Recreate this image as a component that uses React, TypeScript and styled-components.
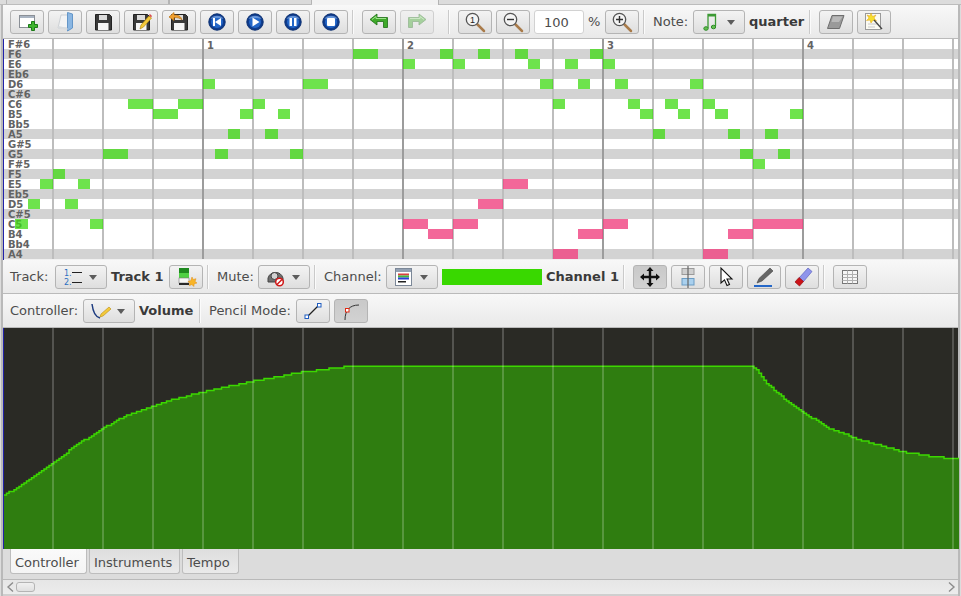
import React from "react"
import styled, { createGlobalStyle } from "styled-components"

const GlobalStyle = createGlobalStyle`
  html, body {
    margin: 0;
    padding: 0;
    background: #dcdcdc;
    overflow: hidden;
  }
  * { box-sizing: border-box; }
`

const Page = styled.div`
  width: 961px;
  height: 596px;
  display: flex;
  flex-direction: column;
  background: #dcdcdc;
  padding: 0 1px;
  font-family: "DejaVu Sans", sans-serif;
  font-size: 13px;
  color: #4c4c4c;
`

const Frame = styled.div`
  flex: 1;
  display: flex;
  flex-direction: column;
  border-left: 2px solid #b9b9b9;
  border-right: 2px solid #b9b9b9;
  min-height: 0;
`

const TabStrip = styled.div`
  height: 5px;
  flex: none;
  display: flex;
  margin-left: -2px;
  margin-right: -2px;
  padding-left: 7px;
  background: #dcdcdc;
  border-bottom: 1px solid #bcbcbc;
`

const TabStub = styled.div<{ $w: number; $active?: boolean }>`
  width: ${({ $w }) => $w}px;
  border-right: 1px solid #b4b4b4;
  border-left: ${({ $active }) => ($active ? "none" : "1px solid #b4b4b4")};
  background: ${({ $active }) => ($active ? "#f2f2f2" : "#dadada")};
  margin-bottom: ${({ $active }) => ($active ? "-1px" : "0")};
`

const Toolbar = styled.div`
  height: 34px;
  flex: none;
  display: flex;
  align-items: flex-start;
  gap: 4px;
  padding: 5px 0 0 7px;
  background: linear-gradient(#f8f8f8, #e9e9e9);
  border-bottom: 1px solid #bababa;
`

const ToolButton = styled.div<{ $pressed?: boolean; $off?: boolean }>`
  width: 34px;
  height: 24px;
  flex: none;
  display: flex;
  align-items: center;
  justify-content: center;
  border-radius: 3px;
  border: 1px solid ${({ $off }) => ($off ? "#cfcfcf" : "#b4b4b4")};
  background: ${({ $pressed, $off }) =>
    $pressed
      ? "linear-gradient(#c9c9c9, #d2d2d2)"
      : $off
        ? "linear-gradient(#f0f0f0, #e4e4e4)"
        : "linear-gradient(#f3f3f3, #dedede)"};
`

const DropButton = styled(ToolButton)`
  width: 52px;
  gap: 4px;
  padding-left: 5px;
  justify-content: flex-start;
`

const Caret = styled.span`
  width: 0;
  height: 0;
  flex: none;
  border-left: 4px solid transparent;
  border-right: 4px solid transparent;
  border-top: 5px solid #5c5c5c;
`

const Label = styled.span<{ $min?: number }>`
  line-height: 24px;
  flex: none;
  min-width: ${({ $min = 0 }) => $min}px;
  white-space: nowrap;
`

const BoldName = styled(Label)`
  font-weight: bold;
  color: #3a3a3a;
`

const Separator = styled.div<{ $lead?: number }>`
  width: 2px;
  height: 24px;
  flex: none;
  margin-left: ${({ $lead = 0 }) => $lead}px;
  margin-right: 4px;
  border-left: 1px solid #cacaca;
  border-right: 1px solid #fbfbfb;
`

const ZoomField = styled.div`
  width: 50px;
  height: 24px;
  flex: none;
  padding-left: 9px;
  line-height: 23px;
  background: #fff;
  border: 1px solid #d2d2d2;
  border-radius: 3px;
`

const Swatch = styled.div`
  width: 100px;
  height: 16px;
  flex: none;
  margin-top: 4px;
  background: #39d800;
`

/* piano roll */

const Roll = styled.div`
  height: 221px;
  flex: none;
  border-left: 1px solid #2222aa;
  background: #f1f1f1;
`

const Lanes = styled.div`
  position: relative;
  height: 220px;
  overflow: hidden;
`

const PitchRow = styled.div<{ $shaded: boolean }>`
  height: 10px;
  padding-left: 4px;
  background: ${({ $shaded }) => ($shaded ? "#d3d3d3" : "#fff")};
  font-size: 10px;
  font-weight: bold;
  line-height: 12px;
  color: #636363;
`

const BeatLine = styled.div<{ $bar: boolean }>`
  position: absolute;
  top: 0;
  bottom: 0;
  width: 2px;
  background: ${({ $bar }) => ($bar ? "#9c9c9c" : "#bdbdbd")};
`

const BarNumber = styled.span`
  position: absolute;
  top: 1px;
  font-size: 10px;
  font-weight: bold;
  line-height: 12px;
  color: #636363;
`

const Note = styled.div<{ $pink?: boolean }>`
  position: absolute;
  height: 10px;
  background: ${({ $pink }) =>
    $pink ? "rgba(240, 70, 130, 0.82)" : "rgba(62, 218, 16, 0.75)"};
`

/* controller lane */

const ChartFrame = styled.div`
  height: 221px;
  flex: none;
  border-left: 1px solid #2222aa;
  background: #2a2a25;

  svg {
    display: block;
  }
`

/* bottom tabs + scrollbar */

const TabBar = styled.div`
  height: 31px;
  flex: none;
  display: flex;
  align-items: flex-start;
  gap: 2px;
  padding-left: 7px;
  background: #dcdcdc;
  border-bottom: 1px solid #b9b9b9;
`

const BottomTab = styled.div<{ $active?: boolean; $w: number }>`
  width: ${({ $w }) => $w}px;
  height: 25px;
  padding-left: 4px;
  line-height: 28px;
  border: 1px solid #bdbdbd;
  border-top: none;
  border-radius: 0 0 3px 3px;
  background: ${({ $active }) =>
    $active ? "linear-gradient(#fafafa, #f4f4f4)" : "linear-gradient(#dedede, #eaeaea)"};
`

const ScrollBar = styled.div`
  height: 14px;
  flex: none;
  display: flex;
  align-items: center;
  padding: 0 1px 0 2px;
  background: linear-gradient(#e6e6e6, #ececec);

  svg {
    flex: none;
    display: block;
  }
`

const ScrollThumb = styled.div`
  width: 19px;
  height: 10px;
  flex: none;
  border: 1px solid #b4b4b4;
  border-radius: 3px;
  background: linear-gradient(#f0f0f0, #e0e0e0);
`

const ScrollFill = styled.div`
  flex: 1;
`

const ScrollEnd = styled.div`
  height: 2px;
  flex: none;
  background: #cfcfcf;
`

/* drawn icons */

const Ic = ({ children, size = 24 }: { children: React.ReactNode; size?: number }) => (
  <svg width={size} height={size} viewBox="0 0 24 24" style={{ flex: "none" }}>
    {children}
  </svg>
)

const Chevron = ({ right }: { right?: boolean }) => (
  <svg width={11} height={12} viewBox="0 0 11 12">
    <path
      d={right ? "M3 1.500L8 6l-5 4.500" : "M8 1.500L3 6l5 4.500"}
      fill="none"
      stroke="#8c8c8c"
      strokeWidth="1.400"
    />
  </svg>
)

const NewIcon = () => (
  <Ic>
    <rect x="4.500" y="5.500" width="15" height="12" fill="#fff" stroke="#8a8f96" />
    <rect x="5" y="6" width="14" height="2" fill="#a9b4c2" />
    <path d="M13.500 14.500h3v-3h3v3h3v3h-3v3h-3v-3h-3z" fill="#3fb52e" stroke="#1d7a18" />
  </Ic>
)

const OpenIcon = () => (
  <Ic>
    <path d="M8 5h10v13H5z" fill="#f2f3f4" stroke="#cdd1d5" />
    <path d="M14.500 2.500l5 1.500v14l-5 3z" fill="#8ab6e2" stroke="#6496c8" />
    <path d="M5.500 16l9 2v2l-9.500-1.500z" fill="#d8dbde" />
  </Ic>
)

const Floppy = () => (
  <>
    <path d="M4.500 4.500h14l2 2v13.500h-16z" fill="#3a3a3a" stroke="#222" />
    <rect x="8" y="5" width="8" height="5" fill="#dcdcdc" />
    <rect x="7" y="13" width="10.500" height="7" fill="#f6f6f6" />
  </>
)

const SaveIcon = () => (
  <Ic>
    <Floppy />
  </Ic>
)

const SaveAsIcon = () => (
  <Ic>
    <Floppy />
    <path d="M11 19l1-4 8-9 2.500 2-8 9z" fill="#f3c93a" stroke="#b98d12" strokeWidth=".7" />
    <path d="M20 5l1-1 2 2-1 1.500z" fill="#d8484a" />
  </Ic>
)

const RevertIcon = () => (
  <Ic>
    <Floppy />
    <path d="M2 7l5-4.500v2.500c4 0 7 1 8 5-2-2-4-2.500-8-2.500v3z" fill="#f0a030" stroke="#b86f10" strokeWidth=".7" />
  </Ic>
)

const MediaDisc = ({ children }: { children: React.ReactNode }) => (
  <Ic>
    <circle cx="12" cy="12" r="8.200" fill="#0e3c8e" stroke="#0b2f70" />
    <circle cx="12" cy="12" r="6" fill="#2467c8" />
    <path d="M5.500 9a7 5 0 0 1 13 0c-3-1.500-10-1.500-13 0z" fill="#8fb6ea" opacity=".6" />
    {children}
  </Ic>
)

const SkipIcon = () => (
  <MediaDisc>
    <path d="M8 8h2v8H8zM16 8v8l-6-4z" fill="#fff" />
  </MediaDisc>
)

const PlayIcon = () => (
  <MediaDisc>
    <path d="M9.500 7.500v9l7-4.500z" fill="#fff" />
  </MediaDisc>
)

const PauseIcon = () => (
  <MediaDisc>
    <path d="M8.500 8h2.500v8H8.500zM13 8h2.500v8H13z" fill="#fff" />
  </MediaDisc>
)

const StopIcon = () => (
  <MediaDisc>
    <rect x="8" y="8" width="8" height="8" rx="1" fill="#fff" />
  </MediaDisc>
)

const ArrowIcon = ({ flip, off }: { flip?: boolean; off?: boolean }) => (
  <Ic>
    <g transform={flip ? "matrix(-1 0 0 1 24 0)" : undefined} opacity={off ? 0.4 : 1}>
      <path
        d="M3 9.500l7-5.500v3.500h10.500v10h-4v-6H10v3.500z"
        fill="#3faa2a"
        stroke="#1e6f16"
        strokeWidth=".8"
      />
      <path d="M5 9.500l4-3v2h10" stroke="#9fe28e" fill="none" />
    </g>
  </Ic>
)

const Lens = ({ children }: { children?: React.ReactNode }) => (
  <Ic>
    <path d="M14 14l7 7" stroke="#a97b4a" strokeWidth="2.500" strokeLinecap="round" />
    <circle cx="9.500" cy="9.500" r="6.200" fill="#f4f4f4" stroke="#555" strokeWidth="1.300" />
    {children}
  </Ic>
)

const ZoomOneIcon = () => (
  <Lens>
    <text x="9.500" y="13" fontSize="9" fontFamily="Liberation Sans" textAnchor="middle" fill="#222">
      1
    </text>
  </Lens>
)

const ZoomOutIcon = () => (
  <Lens>
    <path d="M6 9.500h7" stroke="#333" strokeWidth="1.400" />
  </Lens>
)

const ZoomInIcon = () => (
  <Lens>
    <path d="M6 9.500h7M9.500 6v7" stroke="#333" strokeWidth="1.400" />
  </Lens>
)

const NotesIcon = () => (
  <Ic>
    <path d="M9 18V4.500h7.500V16" fill="none" stroke="#3c9a34" strokeWidth="1.300" />
    <path d="M9 5.500h7.500" stroke="#3c9a34" strokeWidth="2" />
    <ellipse cx="7" cy="18.500" rx="2.200" ry="1.800" fill="#63c04f" stroke="#2f8a2a" />
    <ellipse cx="14.500" cy="17" rx="2.200" ry="1.800" fill="#63c04f" stroke="#2f8a2a" />
  </Ic>
)

const SlabIcon = () => (
  <Ic>
    <path d="M8 5.500h12l-4.500 13H3.500z" fill="#9a9a9a" stroke="#6e6e6e" />
    <path d="M9 6.500h9.500L15 12H7.500z" fill="#b9b9b9" />
  </Ic>
)

const WandDocIcon = () => (
  <Ic>
    <rect x="3.500" y="3.500" width="15" height="16" fill="#fbfaf2" stroke="#9a9a9a" />
    <path d="M6 14h9M6 17h7" stroke="#c8c8c8" />
    <path d="M9 3l1.500 3.500L14 5l-2 3 2.500 3-3.500-.800L9 13l-1-3-3.500.500L7 8 5 5l3 1z" fill="#f6de2c" stroke="#e0a010" strokeWidth=".5" />
    <path d="M12 10l8 9" stroke="#444" strokeWidth="1.300" />
  </Ic>
)

const ListIcon = () => (
  <Ic>
    <text x="3" y="11" fontSize="8" fontFamily="DejaVu Sans" fill="#2a6fc0">
      1.
    </text>
    <text x="3" y="20" fontSize="8" fontFamily="DejaVu Sans" fill="#2a6fc0">
      2.
    </text>
    <path d="M11 7.500h10M11 17.500h10" stroke="#222" strokeWidth="1.200" />
  </Ic>
)

const TrackAddIcon = () => (
  <Ic>
    <rect x="5" y="3" width="10" height="5" fill="#1f8a20" />
    <rect x="5" y="8" width="10" height="5" fill="#4fd044" />
    <rect x="5" y="13" width="10" height="5" fill="#f7f7f7" stroke="#777" strokeWidth=".6" />
    <rect x="5" y="18" width="10" height="2" fill="#2a2a2a" />
    <path d="M18 12l1.200 2.500 2.800-.800-1 2.800 2 1.500-2.800.700-.400 2.800-2-2-2.500 1.200.600-2.700-2-1.500 2.800-.800z" fill="#f8b528" stroke="#e08a10" strokeWidth=".5" />
  </Ic>
)

const MuteIcon = () => (
  <Ic>
    <path d="M4 13a8 8.500 0 0 1 15 0v4H4z" fill="#6e6e6e" stroke="#444" />
    <circle cx="10.500" cy="11" r="3.500" fill="#d0d0d0" stroke="#444" />
    <circle cx="15.500" cy="17" r="3.800" fill="#fff" stroke="#d01818" strokeWidth="1.500" />
    <path d="M13 19.500l5-5" stroke="#d01818" strokeWidth="1.500" />
  </Ic>
)

const CurveIcon = () => (
  <Ic>
    <path d="M3 5c1 8 3 13 8 14" fill="none" stroke="#1e3c80" strokeWidth="1.500" />
    <path d="M11 18l1-3 8-7 2 2-8 7z" fill="#f3c93a" stroke="#b98d12" strokeWidth=".6" />
  </Ic>
)

const PaletteIcon = () => (
  <Ic>
    <rect x="3.500" y="3.500" width="16" height="17" fill="#fff" stroke="#7c8898" />
    <rect x="4" y="4" width="15" height="3" fill="#93a0b2" />
    <rect x="6" y="8.500" width="11" height="2" fill="#d94040" />
    <rect x="6" y="10.500" width="11" height="2" fill="#3fb83f" />
    <rect x="6" y="12.500" width="11" height="2" fill="#2a40d8" />
    <rect x="6" y="16" width="8" height="1.500" fill="#222" />
  </Ic>
)

const LineIcon = () => (
  <Ic>
    <path d="M6 18L18 6" stroke="#222" strokeWidth="1.200" />
    <rect x="4" y="16" width="3.500" height="3.500" fill="#fff" stroke="#1f5cc0" />
    <rect x="16.500" y="4.500" width="3.500" height="3.500" fill="#fff" stroke="#1f5cc0" />
  </Ic>
)

const SmoothIcon = () => (
  <Ic>
    <path d="M6 21c0-9 4-15 14-15" fill="none" stroke="#333" strokeWidth="1" />
    <rect x="6.500" y="9.500" width="3.500" height="3.500" fill="#fff" stroke="#e02810" />
  </Ic>
)

const MoveIcon = () => (
  <Ic>
    <path
      d="M12 2l3.500 4h-2.300v4.800H18V8.500l4 3.500-4 3.500v-2.300h-4.800V18h2.300L12 22l-3.500-4h2.300v-4.800H6v2.300L2 12l4-3.500v2.300h4.800V6H8.500z"
      fill="#111"
    />
  </Ic>
)

const SplitIcon = () => (
  <Ic>
    <rect x="6" y="3.500" width="12" height="6" fill="#cfcfcf" stroke="#9a9a9a" />
    <rect x="6" y="13.500" width="12" height="6.500" fill="#a9d0ee" stroke="#6a9cc4" />
    <path d="M12 1v22" stroke="#666" strokeWidth="1.200" />
  </Ic>
)

const CursorIcon = () => (
  <Ic>
    <path d="M7 3v15l3.500-3.200 2.500 5.700 2.500-1-2.500-5.500H18z" fill="#fff" stroke="#111" strokeWidth="1.100" />
  </Ic>
)

const PencilIcon = () => (
  <Ic>
    <path d="M5 18l2-4.500L18 3l3 3-11 10z" fill="#666" stroke="#444" strokeWidth=".6" />
    <rect x="2" y="20" width="18" height="2" fill="#2467c8" />
  </Ic>
)

const EraserIcon = () => (
  <Ic>
    <path d="M9 13L18 3l4 3.500-8.500 10z" fill="#8f94ec" stroke="#5c62c0" strokeWidth=".7" />
    <path d="M5 17l4-4.500 4.500 4-4 4.500z" fill="#cc1218" stroke="#901010" strokeWidth=".7" />
  </Ic>
)

const TableIcon = () => (
  <Ic>
    <rect x="4.500" y="5.500" width="15" height="13" fill="#f6f6f6" stroke="#777" />
    <path d="M4.500 9.500h15M4.500 12.500h15M4.500 15.500h15M9.500 5.500v13M14.500 5.500v13" stroke="#b0b0b0" />
  </Ic>
)

/* score data */

const PITCHES = [
  "F#6", "F6", "E6", "Eb6", "D6", "C#6", "C6", "B5", "Bb5", "A5", "G#5",
  "G5", "F#5", "F5", "E5", "Eb5", "D5", "C#5", "C5", "B4", "Bb4", "A4",
]
const SHADED = ["F6", "Eb6", "C#6", "A5", "G5", "F5", "Eb5", "C#5", "A4"]

// pitch -> [start x, end x] in page pixels
const GREEN: [string, number, number][] = [
  ["F6", 353, 378], ["F6", 440, 453], ["F6", 478, 490], ["F6", 515, 528], ["F6", 590, 603],
  ["E6", 403, 415], ["E6", 453, 465], ["E6", 528, 540], ["E6", 565, 578], ["E6", 603, 615],
  ["D6", 203, 215], ["D6", 303, 328], ["D6", 540, 553], ["D6", 578, 590], ["D6", 615, 628], ["D6", 690, 703],
  ["C6", 128, 153], ["C6", 178, 203], ["C6", 253, 265], ["C6", 553, 565], ["C6", 628, 640], ["C6", 665, 678], ["C6", 703, 715],
  ["B5", 153, 178], ["B5", 240, 253], ["B5", 278, 290], ["B5", 640, 653], ["B5", 678, 690], ["B5", 715, 728], ["B5", 790, 803],
  ["A5", 228, 240], ["A5", 265, 278], ["A5", 653, 665], ["A5", 728, 740], ["A5", 765, 778],
  ["G5", 103, 128], ["G5", 215, 228], ["G5", 290, 303], ["G5", 740, 753], ["G5", 778, 790],
  ["F#5", 753, 765], ["F5", 53, 65], ["E5", 40, 53], ["E5", 78, 90],
  ["D5", 28, 40], ["D5", 65, 78], ["C5", 15, 28], ["C5", 90, 103],
]
const PINK: [string, number, number][] = [
  ["E5", 503, 528], ["D5", 478, 503],
  ["C5", 403, 428], ["C5", 453, 478], ["C5", 603, 628], ["C5", 753, 803],
  ["B4", 428, 453], ["B4", 578, 603], ["B4", 728, 753],
  ["A4", 553, 578], ["A4", 703, 728],
]

const BEATS = Array.from({ length: 19 }, (_, i) => 53 + i * 50)
const BAR_LINES = [203, 403, 603, 803]

// measured points of the volume curve, in page pixels
const CURVE: [number, number][] = [
  [4, 495], [25, 483], [53, 463], [75, 446], [103, 428], [127, 415], [153, 406], [175, 399],
  [203, 392], [253, 381], [303, 372], [352, 366], [753, 366], [760, 375], [768, 385], [778, 393],
  [785, 400], [803, 412], [815, 420], [828, 428], [845, 434], [853, 438], [878, 445], [903, 452],
  [928, 456], [953, 459], [959, 459],
]

const curveY = (x: number) => {
  for (let i = 1; i < CURVE.length; i++) {
    const [x0, y0] = CURVE[i - 1]
    const [x1, y1] = CURVE[i]
    if (x <= x1) return y0 + ((y1 - y0) * (x - x0)) / (x1 - x0)
  }
  return 459
}

// controller values are 7 bit, so the lane height gives the step
const VALUE_STEP = 221 / 127

const stairPath = () => {
  let d = ""
  for (let x = 4; x < 959; x += 2.5) {
    const y = 328 + Math.round((curveY(x) - 328) / VALUE_STEP) * VALUE_STEP
    d += `${d ? "L" : "M"}${x} ${y.toFixed(1)}L${x + 2.5} ${y.toFixed(1)}`
  }
  return d
}

const VolumeChart = () => {
  const line = stairPath()
  return (
    <svg width={955} height={221} viewBox="4 328 955 221">
      <path d={`${line}L959 549L4 549Z`} fill="#2f7d10" />
      <path d={line} fill="none" stroke="#3cd800" strokeWidth={1.5} />
      {BEATS.map((x) => (
        <rect key={x} x={x - 1} y={328} width={2} height={221} fill="#fff" opacity={0.2} />
      ))}
    </svg>
  )
}

const App = () => (
  <Page>
    <GlobalStyle />
    <TabStrip>
      <TabStub $w={163} />
      <TabStub $w={143} />
      <TabStub $w={127} $active />
    </TabStrip>
    <Frame>
      <Toolbar>
        <ToolButton><NewIcon /></ToolButton>
        <ToolButton><OpenIcon /></ToolButton>
        <ToolButton><SaveIcon /></ToolButton>
        <ToolButton><SaveAsIcon /></ToolButton>
        <ToolButton><RevertIcon /></ToolButton>
        <ToolButton><SkipIcon /></ToolButton>
        <ToolButton><PlayIcon /></ToolButton>
        <ToolButton><PauseIcon /></ToolButton>
        <ToolButton><StopIcon /></ToolButton>
        <Separator />
        <ToolButton><ArrowIcon /></ToolButton>
        <ToolButton $off><ArrowIcon flip off /></ToolButton>
        <Separator $lead={10} />
        <ToolButton><ZoomOneIcon /></ToolButton>
        <ToolButton><ZoomOutIcon /></ToolButton>
        <ZoomField>100</ZoomField>
        <Label $min={13}>%</Label>
        <ToolButton><ZoomInIcon /></ToolButton>
        <Separator />
        <Label $min={36}>Note:</Label>
        <DropButton><NotesIcon /><Caret /></DropButton>
        <BoldName $min={56}>quarter</BoldName>
        <Separator />
        <ToolButton><SlabIcon /></ToolButton>
        <ToolButton><WandDocIcon /></ToolButton>
      </Toolbar>

      <Roll>
        <Lanes>
          {PITCHES.map((p) => (
            <PitchRow key={p} $shaded={SHADED.includes(p)}>{p}</PitchRow>
          ))}
          {BEATS.map((x) => (
            <BeatLine key={x} $bar={BAR_LINES.includes(x)} style={{ left: x - 5 }} />
          ))}
          {BAR_LINES.map((x, i) => (
            <BarNumber key={x} style={{ left: x }}>{i + 1}</BarNumber>
          ))}
          {GREEN.map(([p, a, b]) => (
            <Note
              key={`g${p}${a}`}
              style={{ left: a - 4, width: b - a, top: PITCHES.indexOf(p) * 10 }}
            />
          ))}
          {PINK.map(([p, a, b]) => (
            <Note
              key={`p${p}${a}`}
              $pink
              style={{ left: a - 4, width: b - a, top: PITCHES.indexOf(p) * 10 }}
            />
          ))}
        </Lanes>
      </Roll>

      <Toolbar>
        <Label $min={41}>Track:</Label>
        <DropButton><ListIcon /><Caret /></DropButton>
        <BoldName $min={54}>Track 1</BoldName>
        <ToolButton><TrackAddIcon /></ToolButton>
        <Separator />
        <Label $min={37}>Mute:</Label>
        <DropButton><MuteIcon /><Caret /></DropButton>
        <Separator />
        <Label $min={58}>Channel:</Label>
        <DropButton><PaletteIcon /><Caret /></DropButton>
        <Swatch />
        <BoldName $min={73}>Channel 1</BoldName>
        <Separator />
        <ToolButton $pressed><MoveIcon /></ToolButton>
        <ToolButton><SplitIcon /></ToolButton>
        <ToolButton><CursorIcon /></ToolButton>
        <ToolButton><PencilIcon /></ToolButton>
        <ToolButton><EraserIcon /></ToolButton>
        <Separator />
        <ToolButton><TableIcon /></ToolButton>
      </Toolbar>

      <Toolbar>
        <Label $min={69}>Controller:</Label>
        <DropButton><CurveIcon /><Caret /></DropButton>
        <BoldName $min={56}>Volume</BoldName>
        <Separator />
        <Label $min={83}>Pencil Mode:</Label>
        <ToolButton><LineIcon /></ToolButton>
        <ToolButton $pressed><SmoothIcon /></ToolButton>
      </Toolbar>

      <ChartFrame>
        <VolumeChart />
      </ChartFrame>

      <TabBar>
        <BottomTab $active $w={77}>Controller</BottomTab>
        <BottomTab $w={91}>Instruments</BottomTab>
        <BottomTab $w={57}>Tempo</BottomTab>
      </TabBar>

      <ScrollBar>
        <Chevron />
        <ScrollThumb />
        <ScrollFill />
        <Chevron right />
      </ScrollBar>
      <ScrollEnd />
    </Frame>
  </Page>
)

export default App
